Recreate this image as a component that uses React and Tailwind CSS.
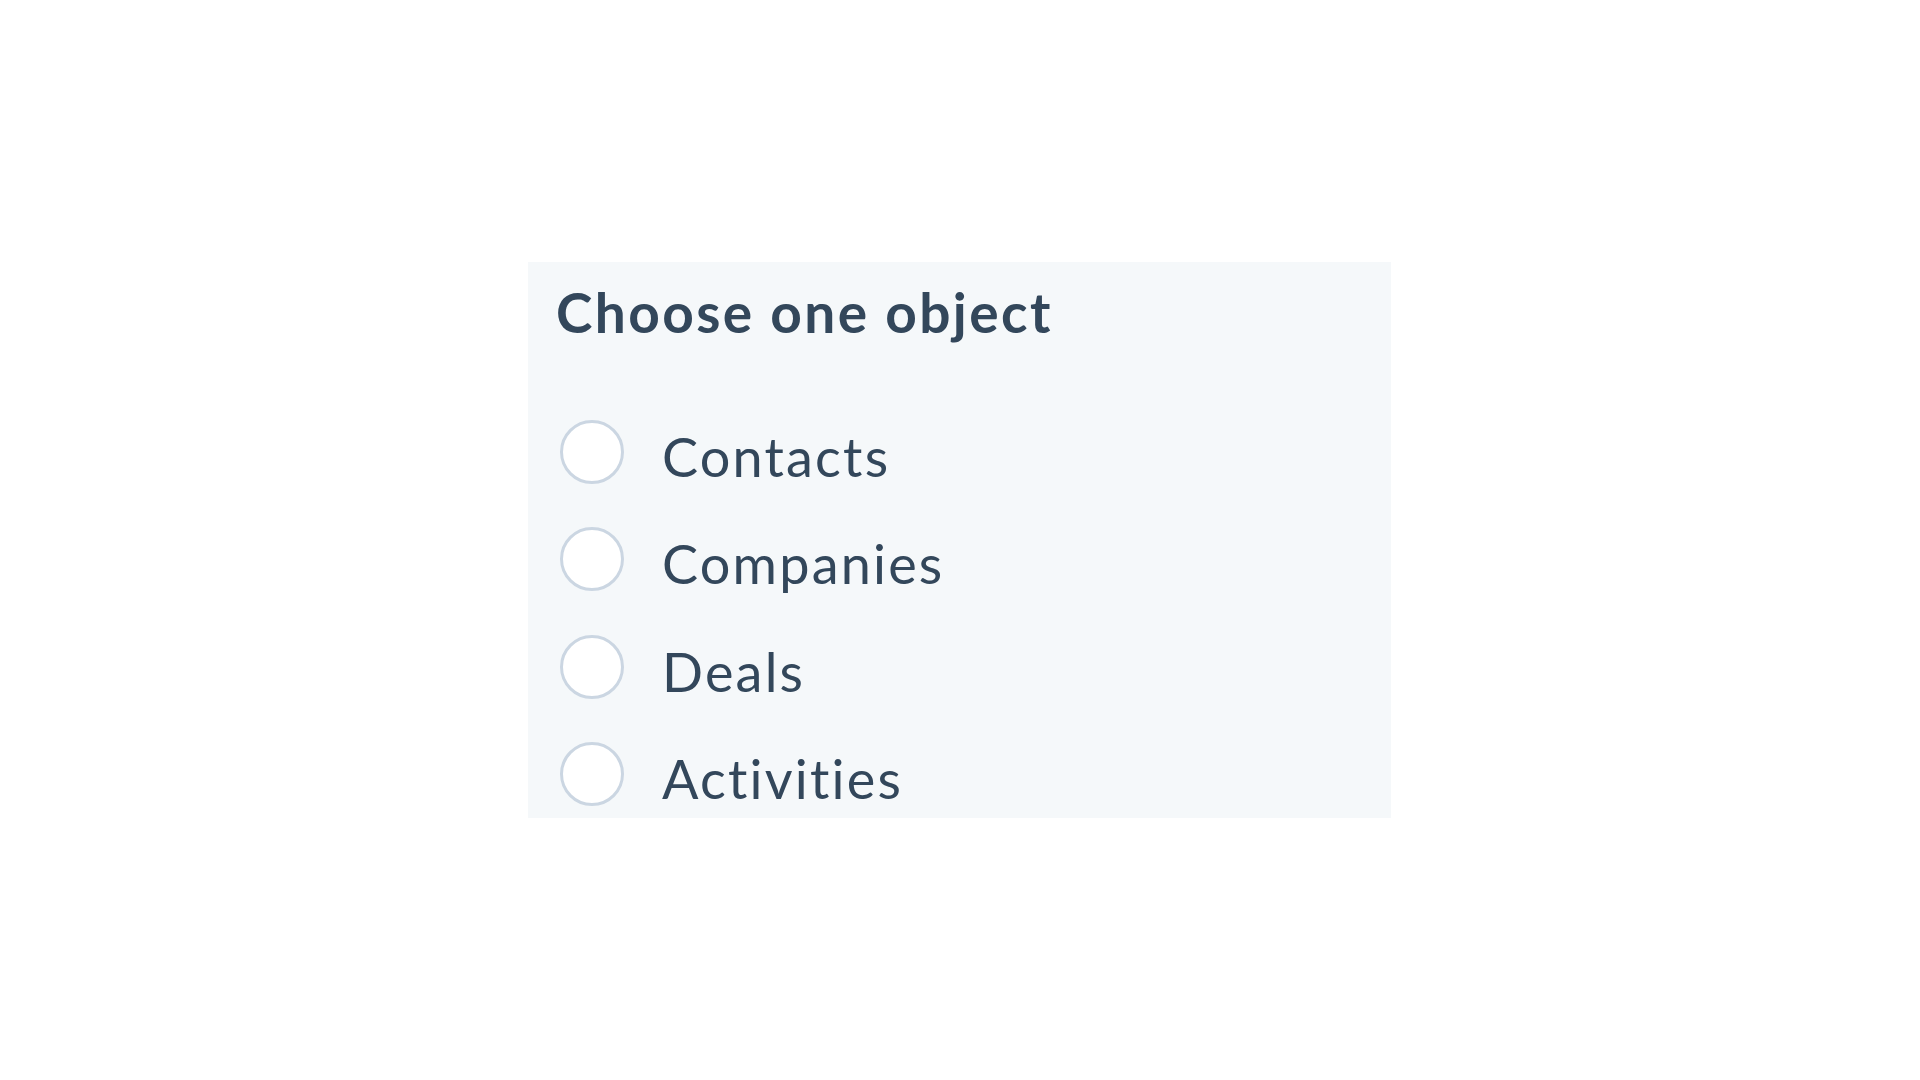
import React, { useState } from "react";

const options = ["Contacts", "Companies", "Deals", "Activities"];

const App = () => {
  const [selected, setSelected] = useState(null);

  return (
    <div className="min-h-screen bg-white pt-[262px] pl-[528px] font-['Lato','Liberation_Sans',sans-serif] text-[#33475b] [font-variant-ligatures:none]">
      <div className="w-[863px] h-[556px] overflow-hidden bg-[#f5f8fa] px-6">
        {/* Heading */}
        <div className="h-[136px] pt-[18px] pl-1">
          <h1 className="text-[55px] leading-[64px] font-bold tracking-[2.4px]">Choose one object</h1>
        </div>

        {/* Options */}
        <div className="flex flex-col">
          {options.map((option) => (
            <label
              key={option}
              className="flex items-center h-[107.5px] cursor-pointer"
              onClick={() => setSelected(option)}
            >
              <span
                className={`ml-2 w-16 h-16 rounded-full border-[3px] bg-white shrink-0 ${
                  selected === option ? "border-[#0091ae]" : "border-[#cbd6e2]"
                }`}
              ></span>
              <span className="ml-[38px] text-[54px] leading-[64px] mt-[10px] tracking-[2.2px]">
                {option}
              </span>
            </label>
          ))}
        </div>
      </div>
    </div>
  );
};

export default App;
